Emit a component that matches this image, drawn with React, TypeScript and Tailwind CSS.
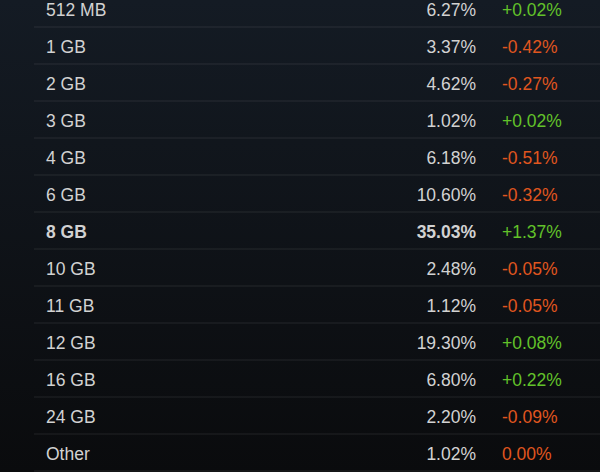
import React from "react";

const rows: [string, string, string, boolean?][] = [
  ["512 MB", "6.27%", "+0.02%"],
  ["1 GB", "3.37%", "-0.42%"],
  ["2 GB", "4.62%", "-0.27%"],
  ["3 GB", "1.02%", "+0.02%"],
  ["4 GB", "6.18%", "-0.51%"],
  ["6 GB", "10.60%", "-0.32%"],
  ["8 GB", "35.03%", "+1.37%", true],
  ["10 GB", "2.48%", "-0.05%"],
  ["11 GB", "1.12%", "-0.05%"],
  ["12 GB", "19.30%", "+0.08%"],
  ["16 GB", "6.80%", "+0.22%"],
  ["24 GB", "2.20%", "-0.09%"],
  ["Other", "1.02%", "0.00%"],
];

export default function App() {
  return (
    <div
      className="w-[600px] h-[472px] overflow-hidden bg-gradient-to-b from-[#141b24] to-[#0a0b0d] text-[17.5px] text-[#d2d2d2]"
      style={{ fontFamily: '"Liberation Sans", Arial, sans-serif' }}
    >
      <div className="-mt-[9px]">
        {rows.map(([label, pct, chg, bold]) => (
          <div
            key={label}
            className="ml-[34px] h-[37px] pt-[3px] flex items-center border-b-2 border-[#ffffff0c]"
          >
            <div className={"pl-[12px] flex-1 " + (bold ? "font-bold" : "")}>{label}</div>
            <div className={"w-[130px] text-right " + (bold ? "font-bold" : "")}>{pct}</div>
            <div
              className={
                "ml-[26px] w-[98px] " +
                (chg.startsWith("+") ? "text-[#62c22a]" : "text-[#e0561f]")
              }
            >
              {chg}
            </div>
          </div>
        ))}
      </div>
    </div>
  );
}
